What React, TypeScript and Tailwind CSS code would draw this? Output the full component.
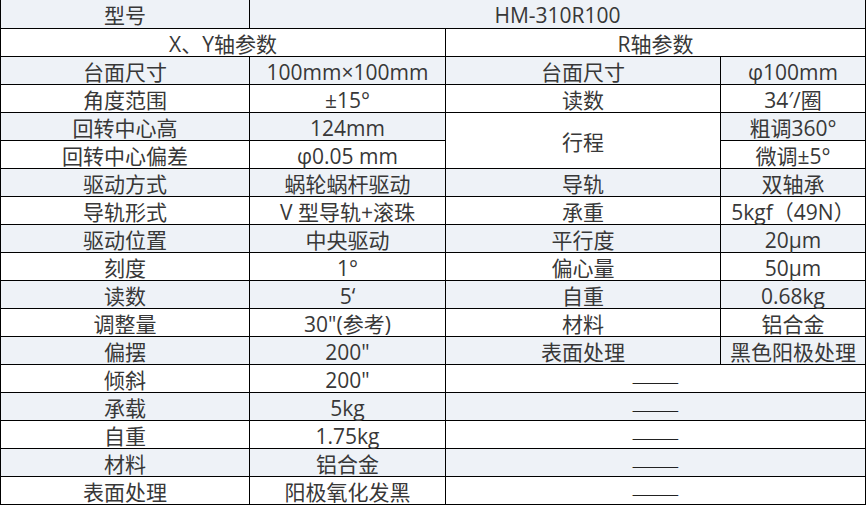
import React from "react";

type Cell = {
  text: string;
  col: string;
  row?: string;
  bg?: boolean;
};

const L = true;

function App() {
  const cells: Cell[] = [
    { text: "型号", col: "col-start-1", bg: L },
    { text: "HM-310R100", col: "col-span-3", bg: L },
    { text: "X、Y轴参数", col: "col-span-2" },
    { text: "R轴参数", col: "col-span-2" },
    { text: "台面尺寸", col: "", bg: L },
    { text: "100mm×100mm", col: "", bg: L },
    { text: "台面尺寸", col: "", bg: L },
    { text: "φ100mm", col: "", bg: L },
    { text: "角度范围", col: "" },
    { text: "±15°", col: "" },
    { text: "读数", col: "" },
    { text: "34′/圈", col: "" },
    { text: "回转中心高", col: "", bg: L },
    { text: "124mm", col: "", bg: L },
    { text: "行程", col: "", row: "row-span-2" },
    { text: "粗调360°", col: "", bg: L },
    { text: "回转中心偏差", col: "" },
    { text: "φ0.05 mm", col: "" },
    { text: "微调±5°", col: "" },
    { text: "驱动方式", col: "", bg: L },
    { text: "蜗轮蜗杆驱动", col: "", bg: L },
    { text: "导轨", col: "", bg: L },
    { text: "双轴承", col: "", bg: L },
    { text: "导轨形式", col: "" },
    { text: "V 型导轨+滚珠", col: "" },
    { text: "承重", col: "" },
    { text: "5kgf（49N）", col: "" },
    { text: "驱动位置", col: "", bg: L },
    { text: "中央驱动", col: "", bg: L },
    { text: "平行度", col: "", bg: L },
    { text: "20μm", col: "", bg: L },
    { text: "刻度", col: "" },
    { text: "1°", col: "" },
    { text: "偏心量", col: "" },
    { text: "50μm", col: "" },
    { text: "读数", col: "", bg: L },
    { text: "5‘", col: "", bg: L },
    { text: "自重", col: "", bg: L },
    { text: "0.68kg", col: "", bg: L },
    { text: "调整量", col: "" },
    { text: "30\"(参考)", col: "" },
    { text: "材料", col: "" },
    { text: "铝合金", col: "" },
    { text: "偏摆", col: "", bg: L },
    { text: "200\"", col: "", bg: L },
    { text: "表面处理", col: "", bg: L },
    { text: "黑色阳极处理", col: "", bg: L },
    { text: "倾斜", col: "" },
    { text: "200\"", col: "" },
    { text: "——", col: "col-span-2" },
    { text: "承载", col: "", bg: L },
    { text: "5kg", col: "", bg: L },
    { text: "——", col: "col-span-2", bg: L },
    { text: "自重", col: "" },
    { text: "1.75kg", col: "" },
    { text: "——", col: "col-span-2" },
    { text: "材料", col: "", bg: L },
    { text: "铝合金", col: "", bg: L },
    { text: "——", col: "col-span-2", bg: L },
    { text: "表面处理", col: "" },
    { text: "阳极氧化发黑", col: "" },
    { text: "——", col: "col-span-2" },
  ];

  return (
    <div
      className="w-[866px] h-[505px] bg-white overflow-hidden text-[#383838]"
      style={{ fontFamily: '"Open Sans", "Noto Sans CJK SC", sans-serif' }}
    >
      <div className="grid grid-cols-[249px_196px_275px_145px] grid-rows-[29px_repeat(17,28px)] border-l border-black w-[866px]">
        {cells.map((c, i) => (
          <div
            key={i}
            className={`${c.col} ${c.row ?? ""} ${
              c.bg ? "bg-[#eef2f7]" : "bg-white"
            } border-r border-b border-black flex items-center justify-center text-[21px] leading-none pt-[3px] whitespace-nowrap`}
          >
            {c.text === "——" ? (
              <span className="inline-block font-['Noto_Sans_CJK_SC',sans-serif] text-[16px] leading-[16px] translate-y-[1px] scale-x-[1.8] text-[#222222]">
                ——
              </span>
            ) : (
              c.text
            )}
          </div>
        ))}
      </div>
    </div>
  );
}

export default App;
